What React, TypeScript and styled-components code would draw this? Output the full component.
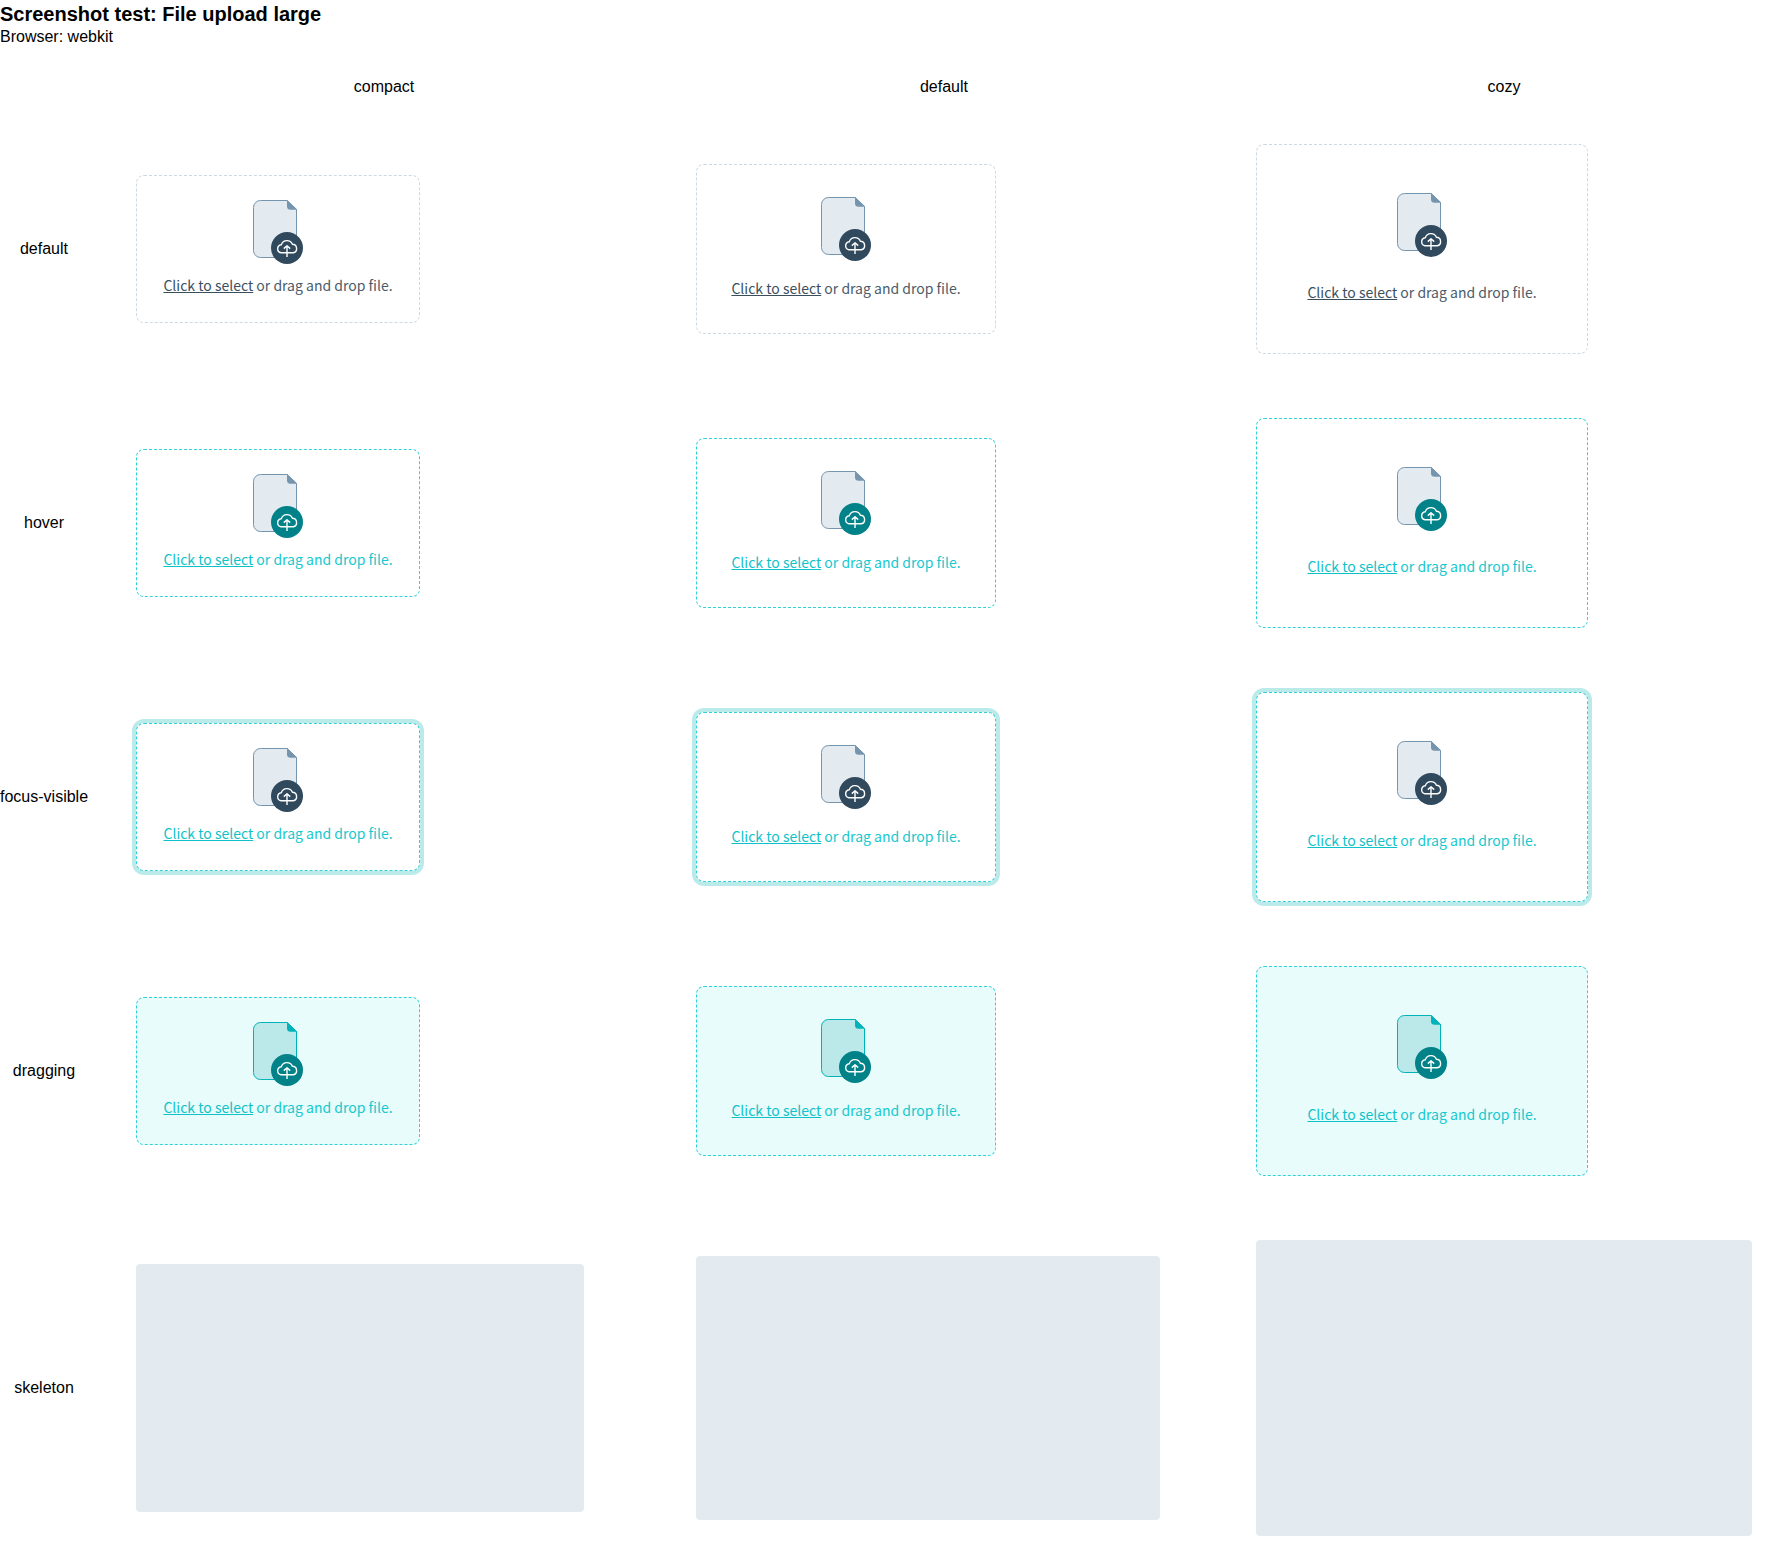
import React from 'react';
import styled, { createGlobalStyle } from 'styled-components';

type Size = 'compact' | 'default' | 'cozy';
type State = 'default' | 'hover' | 'focus-visible' | 'dragging';

const sizes: Size[] = ['compact', 'default', 'cozy'];
const states: State[] = ['default', 'hover', 'focus-visible', 'dragging'];

const padding: Record<Size, number> = { compact: 24, default: 32, cozy: 48 };
const iconGap: Record<Size, number> = { compact: 10, default: 16, cozy: 24 };

const GlobalStyle = createGlobalStyle`
  body {
    margin: 0;
    background: #ffffff;
    color: #000000;
    font: 16px/18px "Liberation Sans", Arial, sans-serif;
  }
`;

const Page = styled.main`
  padding-bottom: 16px;
`;

const Title = styled.h1`
  margin: 0;
  font-size: 20px;
  line-height: 28px;
`;

const Subtitle = styled.p`
  margin: 0;
`;

const Matrix = styled.table`
  display: block;
  padding: 32px 17px 0 0;
`;

const Head = styled.thead`
  display: block;
  margin-bottom: 48px;
`;

const Body = styled.tbody`
  display: flex;
  flex-direction: column;
  gap: 64px;
`;

const Row = styled.tr`
  display: flex;
  align-items: center;
`;

const RowLabel = styled.th`
  flex: 0 0 88px;
  margin-right: 48px;
  padding: 0;
  font-weight: 400;
  text-align: center;
  white-space: nowrap;
`;

const Corner = styled.td`
  flex: 0 0 88px;
  margin-right: 48px;
  padding: 0;
`;

const ColumnLabel = styled.th`
  flex: 1 1 0;
  padding: 0;
  font-weight: 400;
  text-align: center;

  & + & {
    margin-left: 64px;
  }
`;

const Cell = styled.td`
  flex: 1 1 0;
  min-width: 0;
  padding: 0;

  & + & {
    margin-left: 64px;
  }
`;

const Dropzone = styled.label<{ $size: Size; $state: State }>`
  display: flex;
  flex-direction: column;
  align-items: center;
  gap: ${({ $size }) => iconGap[$size]}px;
  box-sizing: border-box;
  width: fit-content;
  padding: ${({ $size }) => padding[$size]}px;
  border: 1px dashed ${({ $state }) => ($state === 'default' ? '#cbd9e4' : '#30d2d7')};
  border-radius: 8px;
  background: ${({ $state }) => ($state === 'dragging' ? '#e7fcfb' : '#ffffff')};
  box-shadow: ${({ $state }) => ($state === 'focus-visible' ? '0 0 0 4px #bbeaea' : 'none')};
  color: ${({ $state }) => ($state === 'default' ? '#4b5c69' : '#17c8ce')};
  cursor: pointer;
`;

const FileInput = styled.input`
  position: absolute;
  width: 1px;
  height: 1px;
  overflow: hidden;
  clip-path: inset(50%);
  opacity: 0;
`;

const Prompt = styled.span`
  min-width: 234px;
  padding-bottom: 2px;
  font: 14px/22px "Noto Sans CJK SC", "Noto Sans", sans-serif;
  text-align: center;
  white-space: nowrap;
`;

const Action = styled.span<{ $state: State }>`
  color: ${({ $state }) => ($state === 'default' ? '#3a4f5d' : '#0fc2c9')};
  text-decoration: underline;
`;

const Skeleton = styled.div<{ $size: Size }>`
  box-sizing: content-box;
  width: 400px;
  height: 200px;
  padding: ${({ $size }) => padding[$size]}px;
  border-radius: 4px;
  background: #e3eaf0;
`;

function UploadIcon({ state }: { state: State }) {
  const dragging = state === 'dragging';
  const sheet = dragging ? '#bbe9ea' : '#e3eaf0';
  const line = dragging ? '#00b2b9' : '#7594ad';
  const badge = dragging || state === 'hover' ? '#008288' : '#31495d';
  return (
    <svg width="50" height="64" viewBox="0 0 50 64" fill="none" aria-hidden="true">
      <path
        d="M7.5 .5H34.2L43.5 9.3V50.5a7 7 0 0 1-7 7H7.5a7 7 0 0 1-7-7V7.5a7 7 0 0 1 7-7Z"
        fill={sheet}
        stroke={line}
      />
      <path d="M34 0L44 9.7H37.5A3.5 3.5 0 0 1 34 6.200Z" fill={line} />
      <circle cx="34" cy="48" r="16" fill={badge} />
      <path
        d="M28 52.800A4.100 4.100 0 0 1 28.300 44.700A5.900 5.900 0 0 1 39.400 44.300A4.300 4.300 0 0 1 40.200 52.800ZM34 57V46.200M30.800 48.600L34 45.800L37.200 48.600"
        stroke="#ffffff"
        strokeWidth="1.4"
        strokeLinejoin="round"
      />
    </svg>
  );
}

function FileUpload({ size, state }: { size: Size; state: State }) {
  return (
    <Dropzone $size={size} $state={state}>
      <UploadIcon state={state} />
      <Prompt>
        <Action $state={state}>Click to select</Action> or drag and drop file.
      </Prompt>
      <FileInput type="file" />
    </Dropzone>
  );
}

export default function App() {
  return (
    <>
      <GlobalStyle />
      <Page>
        <Title>Screenshot test: File upload large</Title>
        <Subtitle>Browser: webkit</Subtitle>
        <Matrix>
          <Head>
            <Row>
              <Corner />
              {sizes.map((size) => (
                <ColumnLabel key={size} scope="col">{size}</ColumnLabel>
              ))}
            </Row>
          </Head>
          <Body>
            {states.map((state) => (
              <Row key={state}>
                <RowLabel scope="row">{state}</RowLabel>
                {sizes.map((size) => (
                  <Cell key={size}>
                    <FileUpload size={size} state={state} />
                  </Cell>
                ))}
              </Row>
            ))}
            <Row>
              <RowLabel scope="row">skeleton</RowLabel>
              {sizes.map((size) => (
                <Cell key={size}>
                  <Skeleton $size={size} />
                </Cell>
              ))}
            </Row>
          </Body>
        </Matrix>
      </Page>
    </>
  );
}
